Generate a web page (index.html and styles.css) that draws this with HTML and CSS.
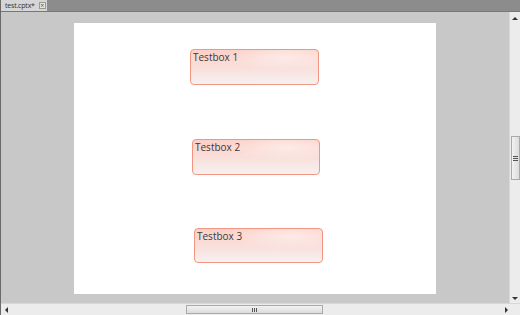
FILE: index.html
```
<!DOCTYPE html>
<html>
<head>
<meta charset="utf-8">
<link rel="stylesheet" href="styles.css">
</head>
<body>
<div class="app">
  <div class="tabbar">
    <div class="tab"><span class="tab-label">test.cptx*</span><span class="tab-close">×</span></div>
  </div>
  <div class="main">
    <div class="canvas">
      <div class="slide">
        <div class="tbox tb1"><span>Testbox 1</span></div>
        <div class="tbox tb2"><span>Testbox 2</span></div>
        <div class="tbox tb3"><span>Testbox 3</span></div>
      </div>
    </div>
    <div class="vscroll">
      <div class="arrow-up"></div>
      <div class="vthumb"><div class="grip-v"></div></div>
      <div class="arrow-down"></div>
    </div>
  </div>
  <div class="hscroll">
    <div class="arrow-left"></div>
    <div class="htrack"><div class="hthumb"><div class="grip-h"></div></div></div>
    <div class="arrow-right"></div>
  </div>
</div>
</body>
</html>
```
FILE: styles.css
```
html, body { margin: 0; padding: 0; }
body { width: 520px; height: 315px; overflow: hidden; font-family: "Open Sans", "Liberation Sans", sans-serif; }
.app { width: 520px; height: 315px; display: flex; flex-direction: column; background: #c8c8c8; border-left: 1px solid #6a6a6a; box-sizing: border-box; }
.tabbar { height: 12px; background: #8c8c8c; border-bottom: 1px solid #777; box-sizing: border-box; display: flex; align-items: flex-end; }
.tab { height: 11px; width: 46px; background: #d6d6d6; display: flex; align-items: center; box-sizing: border-box; padding-left: 4px; }
.tab-label { font-size: 7px; color: #333; line-height: 8px; letter-spacing: -0.2px; }
.tab-close { margin-left: 4px; width: 7px; height: 7px; border: 1px solid #999; box-sizing: border-box; font-size: 7px; line-height: 5px; text-align: center; color: #555; background: #e4e4e4; }
.main { flex: 1; display: flex; min-height: 0; }
.canvas { flex: 1; padding: 11px 0 0 73px; }
.slide { width: 362px; height: 271px; background: #fff; display: flex; flex-direction: column; }
.tbox { height: 36px; box-sizing: border-box; border: 1px solid #f39583; border-radius: 4px;
  background: radial-gradient(ellipse 70% 60% at 75% 20%, rgba(255,255,255,0.5), rgba(255,255,255,0) 70%), linear-gradient(to bottom, #fdd0c8 0%, #f9e0dc 55%, #f5f1f1 100%);
  padding: 0 0 0 2px; }
.tbox span { display: block; font-size: 10px; line-height: 12px; color: #3a3a3a; margin-top: 1px; }
.tb1 { width: 129px; margin: 26px 0 0 116px; }
.tb2 { width: 128px; margin: 54px 0 0 118px; }
.tb3 { width: 129px; height: 35px; margin: 53px 0 0 120px; }
.vscroll { width: 11px; background: #ececec; border-left: 1px solid #d8d8d8; box-sizing: border-box; display: flex; flex-direction: column; align-items: center; padding: 5px 0 3px; }
.arrow-up { width: 0; height: 0; border-left: 3px solid transparent; border-right: 3px solid transparent; border-bottom: 3px solid #333; }
.arrow-down { width: 0; height: 0; border-left: 3px solid transparent; border-right: 3px solid transparent; border-top: 3px solid #333; }
.vthumb { width: 9px; height: 44px; margin: 116px 0 auto; border: 1px solid #aaa; box-sizing: border-box; background: linear-gradient(to right, #f2f2f2, #dcdcdc); display: flex; align-items: center; justify-content: center; }
.grip-v { width: 5px; height: 5px; background: repeating-linear-gradient(to bottom, #555 0 1px, transparent 1px 2px); }
.hscroll { height: 12px; background: #ececec; border-top: 1px solid #d8d8d8; box-sizing: border-box; display: flex; align-items: center; padding: 0 12px 0 4px; }
.arrow-left { width: 0; height: 0; border-top: 3px solid transparent; border-bottom: 3px solid transparent; border-right: 3px solid #333; }
.arrow-right { width: 0; height: 0; border-top: 3px solid transparent; border-bottom: 3px solid transparent; border-left: 3px solid #333; }
.htrack { flex: 1; height: 10px; display: flex; align-items: center; }
.hthumb { width: 137px; height: 9px; margin-left: 178px; border: 1px solid #aaa; box-sizing: border-box; background: linear-gradient(to bottom, #f2f2f2, #dcdcdc); display: flex; align-items: center; justify-content: center; }
.grip-h { width: 5px; height: 4px; background: repeating-linear-gradient(to right, #555 0 1px, transparent 1px 2px); }
```
